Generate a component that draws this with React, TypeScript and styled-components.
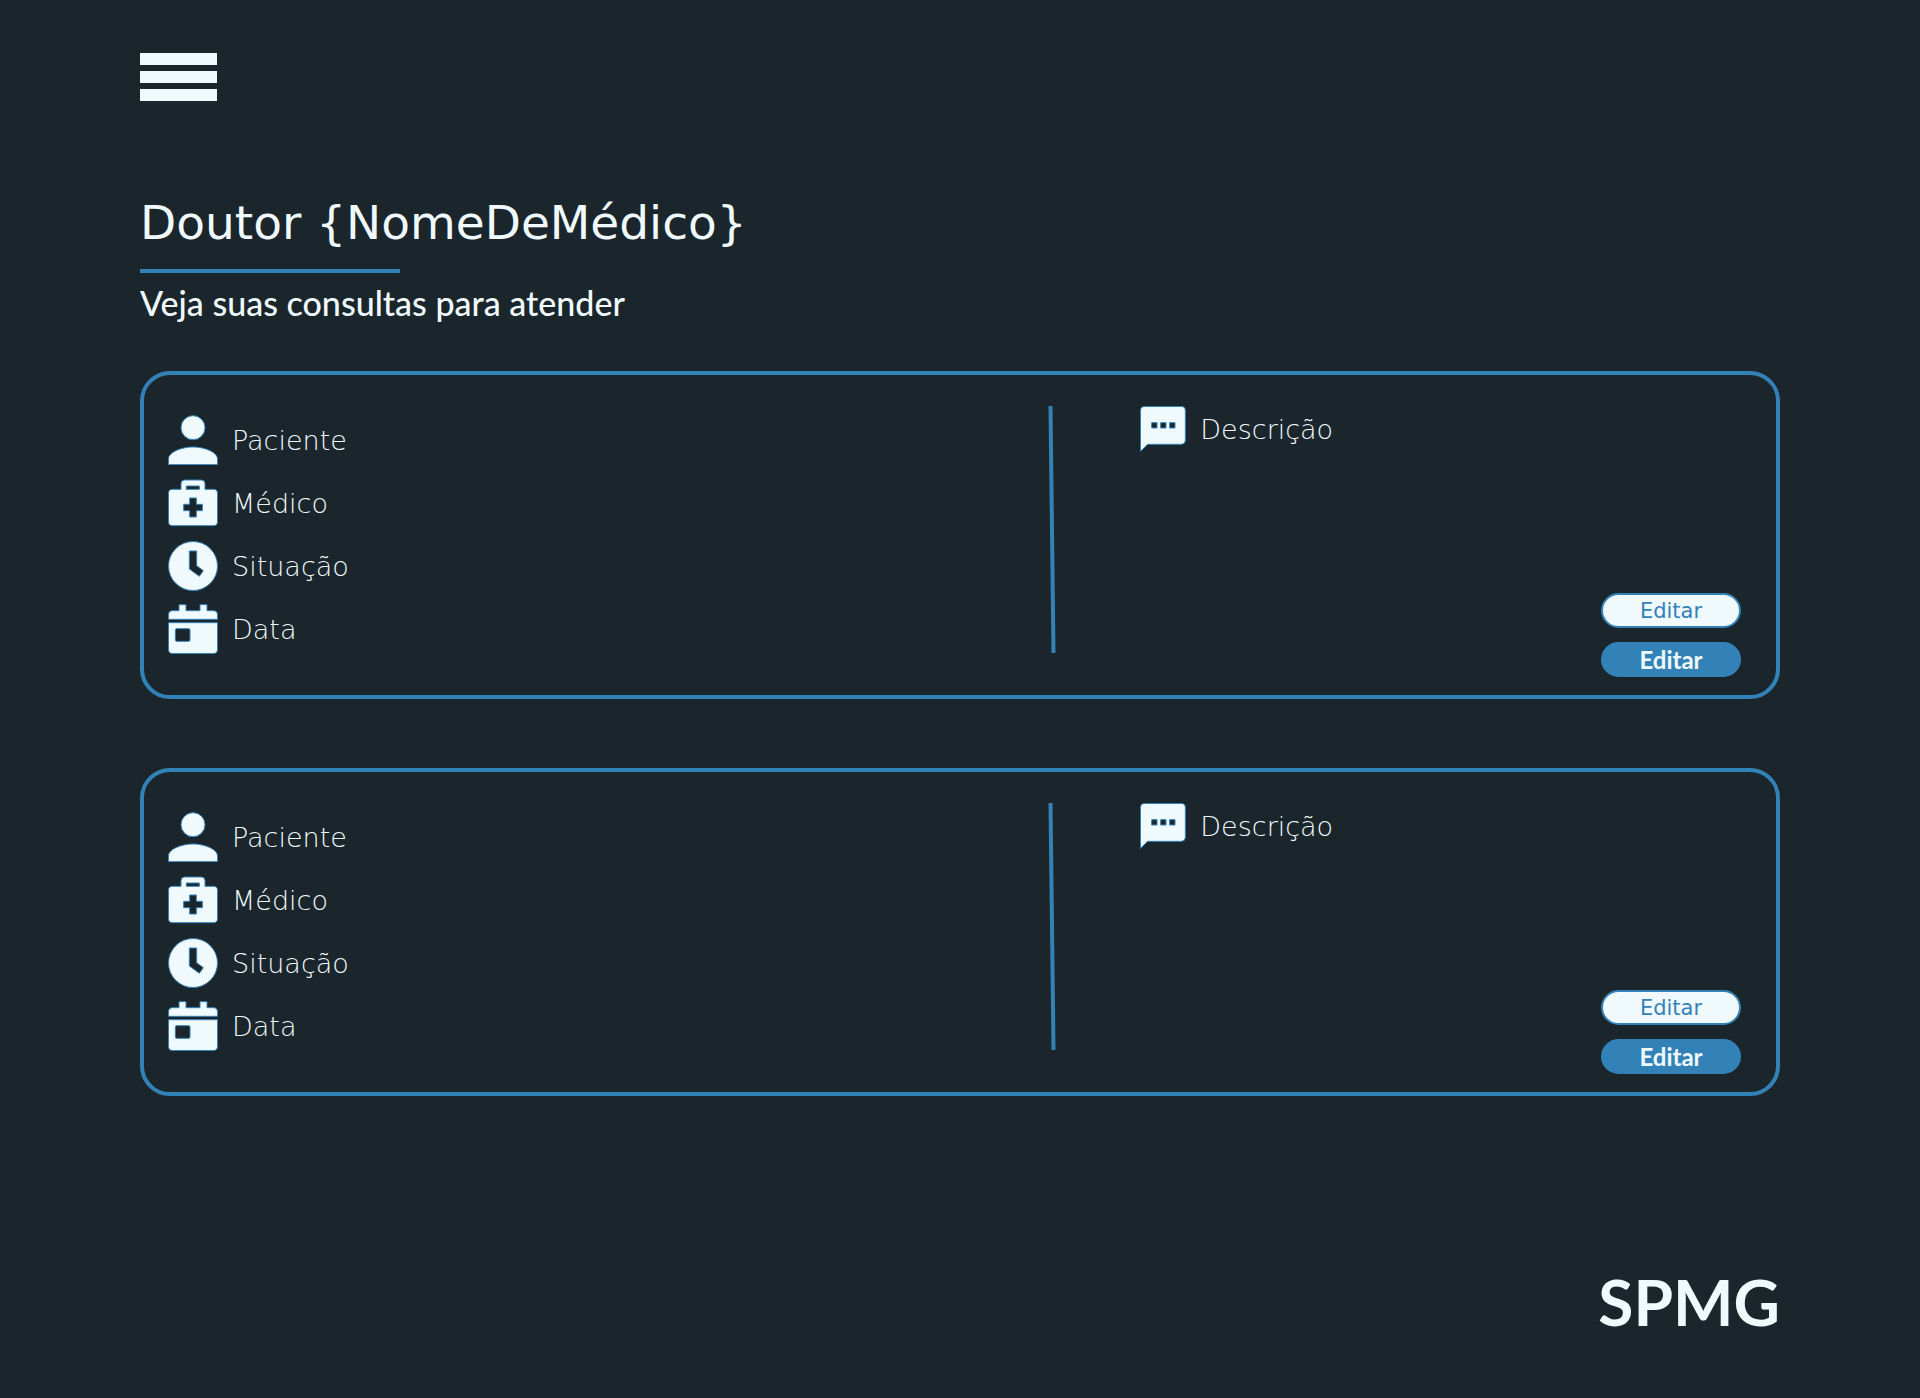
import React from "react";
import styled, { createGlobalStyle } from "styled-components";

const color = { night: "#1b262c", ice: "#f0f9fc", blue: "#3282b8" };
const font = {
  display: '"DejaVu Sans", sans-serif',
  strong: "Lato, sans-serif",
};

const GlobalStyle = createGlobalStyle`
  *, *::before, *::after { box-sizing: border-box; }
  body { margin: 0; background: ${color.night}; color: ${color.ice}; font-family: ${font.display}; }
  h1, h2, p, ul { margin: 0; padding: 0; }
  button { cursor: pointer; }
`;

const Page = styled.div`
  min-height: 100vh;
  display: flex;
  flex-direction: column;
  padding: 53px 140px 56px;
`;

const MenuButton = styled.button`
  display: flex;
  flex-direction: column;
  gap: 6px;
  width: 77px;
  padding: 0;
  border: 0;
  background: none;
`;

const MenuBar = styled.span`
  height: 12px;
  background: ${color.ice};
`;

const Heading = styled.header`
  display: flex;
  flex-direction: column;
  align-items: flex-start;
  padding: 90px 0 48px;
`;

const Title = styled.h1`
  font-size: 47px;
  line-height: 64px;
  font-weight: 400;
  padding-bottom: 14px;
`;

const Rule = styled.span`
  width: 260px;
  height: 4px;
  background: ${color.blue};
`;

const Subtitle = styled.h2`
  font: 500 34px/40px ${font.strong};
  padding-top: 10px;
`;

const List = styled.main`
  display: flex;
  flex-direction: column;
  gap: 69px;
`;

const Card = styled.article`
  display: grid;
  grid-template-columns: 9fr 8px 7fr;
  min-height: 328px;
  padding: 31px 35px 18px 24px;
  border: 4px solid ${color.blue};
  border-radius: 30px;
`;

const Fields = styled.ul`
  display: flex;
  flex-direction: column;
  gap: 13px;
  padding-top: 9px;
  list-style: none;
`;

const Field = styled.li`
  display: flex;
  align-items: center;
  gap: 14px;
`;

const Label = styled.span`
  padding-top: 2px;
  font-size: 27px;
  line-height: 32px;
  font-weight: 200;
`;

const Divider = styled.svg`
  width: 8px;
  height: 247px;
`;

const Details = styled.div`
  display: flex;
  flex-direction: column;
  justify-content: space-between;
  padding-left: 84px;
`;

const Description = styled(Field).attrs({ as: "p" })``;

const Actions = styled.div`
  display: flex;
  flex-direction: column;
  align-items: flex-end;
  gap: 14px;
`;

const EditButton = styled.button<{ $filled?: boolean }>`
  width: 140px;
  height: 35px;
  padding: 0;
  border: 2px solid ${color.blue};
  border-radius: 18px;
  font: ${(p) => (p.$filled ? `700 24px/28px ${font.strong}` : `400 21px/28px ${font.display}`)};
  color: ${(p) => (p.$filled ? color.ice : color.blue)};
  background: ${(p) => (p.$filled ? color.blue : color.ice)};
`;

const Footer = styled.footer`
  margin-top: auto;
  text-align: right;
  font: 700 64px/80px ${font.strong};
`;

const Glyph = styled.svg<{ $size: number }>`
  flex: none;
  width: ${(p) => p.$size}px;
  height: ${(p) => p.$size}px;
  fill: ${color.ice};
  fill-rule: evenodd;
  stroke: ${color.blue};
  stroke-width: 3;
`;

const icons = {
  person:
    "M75 2a36 36 0 1 1 0 72a36 36 0 1 1 0-72ZM75 96C110 96 148.500 112 148.500 132V149H1.500V132C1.500 112 40 96 75 96Z",
  medkit:
    "M39 34V17Q39 6 50 6H100Q111 6 111 17V34H136Q148.500 34 148.500 46V131Q148.500 143 136 143H14Q1.500 143 1.500 131V46Q1.500 34 14 34ZM55 24V34H94V24ZM65 60V79H47V98H65V117H85V98H103V79H85V60Z",
  clock:
    "M75 1.500a73.500 73.500 0 1 1 0 147a73.500 73.500 0 1 1 0-147ZM64 30V84L94 106L106 89L86 74V30Z",
  calendar:
    "M1.500 46V33Q1.500 20 14 20H33V2H54V20H96V2H117V20H136Q148.500 20 148.500 33V46ZM1.500 56H148.500V136Q148.500 148.500 136 148.500H14Q1.500 148.500 1.500 136ZM26 74Q22 74 22 78V108Q22 112 26 112H62Q66 112 66 108V78Q66 74 62 74Z",
  message:
    "M14 1.500H124Q136 1.500 136 14V103Q136 115 124 115H23L1.500 136V14Q1.500 1.500 14 1.500ZM35 50V66H51V50ZM62 50V66H78V50ZM89 50V66H105V50Z",
};

function Icon({ name, size = 50 }: { name: keyof typeof icons; size?: number }) {
  return (
    <Glyph $size={size} viewBox={`0 0 ${size * 3} ${size * 3}`} aria-hidden="true">
      <path d={icons[name]} />
    </Glyph>
  );
}

function Appointment() {
  return (
    <Card>
      <Fields>
        <Field><Icon name="person" /><Label>Paciente</Label></Field>
        <Field><Icon name="medkit" /><Label>Médico</Label></Field>
        <Field><Icon name="clock" /><Label>Situação</Label></Field>
        <Field><Icon name="calendar" /><Label>Data</Label></Field>
      </Fields>
      <Divider viewBox="0 0 8 247" aria-hidden="true">
        <path d="M2.500 0L5.500 247" stroke={color.blue} strokeWidth="4" />
      </Divider>
      <Details>
        <Description><Icon name="message" size={46} /><Label>Descrição</Label></Description>
        <Actions>
          <EditButton type="button">Editar</EditButton>
          <EditButton type="button" $filled>Editar</EditButton>
        </Actions>
      </Details>
    </Card>
  );
}

export default function App() {
  return (
    <Page>
      <GlobalStyle />
      <MenuButton type="button" aria-label="Menu"><MenuBar /><MenuBar /><MenuBar /></MenuButton>
      <Heading>
        <Title>{"Doutor {NomeDeMédico}"}</Title>
        <Rule />
        <Subtitle>Veja suas consultas para atender</Subtitle>
      </Heading>
      <List>
        <Appointment />
        <Appointment />
      </List>
      <Footer>SPMG</Footer>
    </Page>
  );
}
